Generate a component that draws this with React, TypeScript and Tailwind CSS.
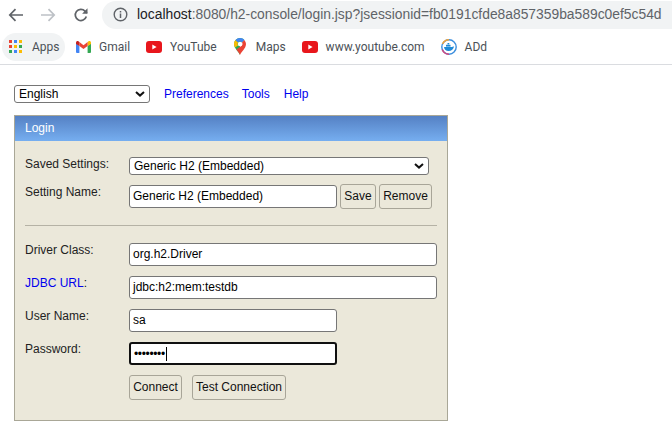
const sans = "font-['Liberation_Sans',Arial,sans-serif]";
const ui = "font-['Roboto','Noto_Sans',sans-serif]";

const Chevron = ({ className = '' }: { className?: string }) => (
  <svg width="10" height="6" viewBox="0 0 10 6" className={className}>
    <path d="M1 1l4 3.6L9 1" fill="none" stroke="#111" strokeWidth="2" />
  </svg>
);

const Yt = () => (
  <svg width="16" height="12" viewBox="0 0 16 12" className="shrink-0">
    <rect width="16" height="12" rx="3" fill="#e8161c" />
    <path d="M6.3 3.4v5.2L10.6 6z" fill="#fff" />
  </svg>
);

const Bookmark = ({ icon, label, className = '' }: { icon: React.ReactNode; label: string; className?: string }) => (
  <div className={`flex items-center ${className}`}>
    {icon}
    <span className="text-[12px] text-[#4b5157] whitespace-nowrap">{label}</span>
  </div>
);

const AppsIcon = () => {
  const colors = ['#ea4335', '#4285f4', '#fbbc04', '#ea4335', '#fbbc04', '#34a853', '#34a853', '#4285f4', '#fbbc04'];
  return (
    <div className="grid grid-cols-3 gap-[2px] w-[13px] shrink-0">
      {colors.map((c, i) => (
        <div key={i} className="w-[3px] h-[3px]" style={{ background: c }} />
      ))}
    </div>
  );
};

const Gmail = () => (
  <svg width="15" height="12" viewBox="0 0 15 12" className="shrink-0">
    <path d="M0 2.2V11a1 1 0 001 1h2.4V5z" fill="#4285f4" />
    <path d="M15 2.2V11a1 1 0 01-1 1h-2.4V5z" fill="#34a853" />
    <path d="M11.6 5V1l1-.7c1-.7 2.4 0 2.4 1.5V3z" fill="#fbbc04" />
    <path d="M3.4 5V1l4.1 3.2L11.6 1v4L7.5 8z" fill="#ea4335" />
    <path d="M0 1.8C0 .3 1.400-.4 2.400.3l1 .7v4L0 3z" fill="#c5221f" />
  </svg>
);

const MapsPin = () => (
  <svg width="12" height="17" viewBox="0 0 12 17" className="shrink-0">
    <path d="M6 17C4.800 13.500 0 10.500 0 6a6 6 0 016-6c1.700 0 3.200.7 4.300 1.900L6 6z" fill="#34a853" />
    <path d="M1.400 2.200A6 6 0 016 0c1.700 0 3.200.7 4.300 1.900L8 4.500A2.500 2.500 0 004 4.500z" fill="#4285f4" />
    <path d="M0 6c0-1.500.5-2.800 1.400-3.800L4 4.500A2.500 2.500 0 004 7.500L1 9.500C.4 8.500 0 7.300 0 6z" fill="#fbbc04" />
    <path d="M8 4.500l2.300-2.600A6 6 0 0112 6c0 4.500-4.800 7.500-6 11-.6-1.900-2.300-3.700-3.700-5.500L8 7.500a2.500 2.500 0 000-3z" fill="#ea4335" />
    <circle cx="6" cy="6" r="2.200" fill="#fff" />
  </svg>
);

const Docker = () => (
  <svg width="16" height="16" viewBox="0 0 16 16" className="shrink-0">
    <circle cx="8" cy="8" r="7.200" fill="#fff" stroke="#3b8ede" strokeWidth="1.400" />
    <path d="M1.500 5A7.200 7.200 0 018 .8" fill="none" stroke="#f2a33a" strokeWidth="1.400" />
    <path d="M1.200 10.500A7.200 7.200 0 008 15.200" fill="none" stroke="#d6457c" strokeWidth="1.400" />
    <path d="M3 8h8c.6-.6 1.300-.7 2-.5-.4 2.500-2.500 4.500-5.500 4.500C5 12 3.300 10.500 3 8z" fill="#1f8ad6" />
    <rect x="5" y="5.800" width="4.500" height="1.800" fill="#1f8ad6" />
    <rect x="6.500" y="4" width="1.800" height="1.500" fill="#1f8ad6" />
  </svg>
);

const fieldInput = 'h-[23px] rounded-[3px] border border-[#767676] bg-white pl-[3px] pb-[1px] flex items-center text-[12px] text-black whitespace-nowrap';
const button = 'h-[25px] rounded-[3px] border border-[#a8a598] bg-[#ebe8da] pb-[1px] flex items-center justify-center text-[12px] text-[#111]';

const Label = ({ children, className = '' }: { children: React.ReactNode; className?: string }) => (
  <div className={`w-[104px] shrink-0 text-[12px] leading-[14px] text-[#222] ${className}`}>{children}</div>
);

export default function App() {
  return (
    <div className={`w-[672px] h-[434px] bg-white overflow-hidden ${sans}`}>
      {/* browser toolbar */}
      <div className="h-[29px] flex items-center">
        <svg width="16" height="14" viewBox="0 0 16 14" className="ml-[8px] shrink-0">
          <path d="M15 7H2M7.500 1.200L1.800 7l5.700 5.800" fill="none" stroke="#5f6368" strokeWidth="1.700" />
        </svg>
        <svg width="16" height="14" viewBox="0 0 16 14" className="ml-[16px] shrink-0">
          <path d="M1 7h13M8.500 1.200L14.200 7l-5.700 5.800" fill="none" stroke="#bdc1c6" strokeWidth="1.700" />
        </svg>
        <svg width="16" height="16" viewBox="0 0 16 16" className="ml-[17px] shrink-0">
          <path d="M13.300 9.500a5.600 5.600 0 11-1.300-5.400L14 6" fill="none" stroke="#5f6368" strokeWidth="1.700" />
          <path d="M14.500 1.300v5.400H9.100z" fill="#5f6368" />
        </svg>
        <div className="ml-[13px] h-[28px] flex-1 rounded-l-[14px] bg-[#f1f3f4] flex items-center">
          <svg width="15" height="15" viewBox="0 0 15 15" className="ml-[11px] shrink-0">
            <circle cx="7.500" cy="7.500" r="6.300" fill="none" stroke="#5f6368" strokeWidth="1.400" />
            <path d="M7.500 6.600v4.300M7.500 3.900v1.500" stroke="#5f6368" strokeWidth="1.500" />
          </svg>
          <span className={`ml-[9px] text-[13.850px] text-[#5f6368] whitespace-nowrap ${sans}`}>
            <span className="text-[#202124]">localhost</span>:8080/h2-console/login.jsp?jsessionid=fb0191cfde8a857359ba589c0ef5c54d
          </span>
        </div>
      </div>

      {/* bookmarks bar */}
      <div className={`h-[36px] flex items-center border-b border-[#dadce0] ${ui}`}>
        <div className="ml-[2px] h-[28px] w-[63px] rounded-[14px] bg-[#f1f3f4] flex items-center pl-[7px] gap-[10px]">
          <AppsIcon />
          <span className="text-[12px] text-[#4b5157]">Apps</span>
        </div>
        <Bookmark icon={<Gmail />} label="Gmail" className="ml-[11px] gap-[8px]" />
        <Bookmark icon={<Yt />} label="YouTube" className="ml-[16px] gap-[8px]" />
        <Bookmark icon={<MapsPin />} label="Maps" className="ml-[17px] gap-[10px]" />
        <Bookmark icon={<Yt />} label="www.youtube.com" className="ml-[16px] gap-[8px]" />
        <Bookmark icon={<Docker />} label="ADd" className="ml-[16px] gap-[8px]" />
      </div>

      {/* page */}
      <div className="pl-[14px] pt-[19px] text-[12px]">
        <div className="flex items-center h-[19px]">
          <div className="w-[136px] h-[18px] rounded-[3px] border border-[#767676] bg-white flex items-center justify-between pl-1 pr-[4px] text-[12px] text-black">
            English
            <Chevron />
          </div>
          <a className="ml-[14px] text-[12px] text-[#0000ee]">Preferences</a>
          <a className="ml-[13px] text-[12px] text-[#0000ee]">Tools</a>
          <a className="ml-[14px] text-[12px] text-[#0000ee]">Help</a>
        </div>

        <div className="mt-[12px] w-[434px] h-[306px] border border-[#a9a797] bg-[#ebe8da]">
          <div className="h-[25px] pl-[10px] pb-[2px] flex items-center text-[12px] text-white bg-gradient-to-b from-[#5581c4] to-[#76aef0]">
            Login
          </div>

          <div className="pl-[10px] pt-[16px]">
            <div className="flex items-start">
              <Label>Saved Settings:</Label>
              <div className="w-[300px] h-[18px] rounded-[3px] border border-[#767676] bg-white flex items-center justify-between pl-[4px] pr-[4px] text-[12px] text-black">
                Generic H2 (Embedded)
                <Chevron />
              </div>
            </div>

            <div className="flex items-start mt-[10px]">
              <Label>Setting Name:</Label>
              <div className={`${fieldInput} w-[208px]`}>Generic H2 (Embedded)</div>
              <div className={`${button} w-[36px] ml-[3px] -mt-[1px]`}>Save</div>
              <div className={`${button} w-[53px] ml-[3px] -mt-[1px]`}>Remove</div>
            </div>

            <div className="mt-[16px] w-[412px] h-px bg-[#b5b2a5]" />

            <div className="flex items-start mt-[17px]">
              <Label>Driver Class:</Label>
              <div className={`${fieldInput} w-[308px] h-[22px]`}>org.h2.Driver</div>
            </div>
            <div className="flex items-start mt-[10px]">
              <Label>
                <span className="text-[#0000ee]">JDBC URL</span>:
              </Label>
              <div className={`${fieldInput} w-[308px]`}>jdbc:h2:mem:testdb</div>
            </div>
            <div className="flex items-start mt-[10px]">
              <Label>User Name:</Label>
              <div className={`${fieldInput} w-[208px]`}>sa</div>
            </div>
            <div className="flex items-start mt-[10px]">
              <Label>Password:</Label>
              <div className="w-[208px] h-[23px] rounded-[3px] border-2 border-[#101010] bg-white pl-[3px] flex items-center">
                <span className="text-[12px] tracking-[-0.350px] text-black leading-none">••••••••</span>
                <span className="ml-[1px] w-px h-[14px] bg-black" />
              </div>
            </div>
            <div className="flex items-start mt-[10px] pl-[104px]">
              <div className={`${button} w-[53px]`}>Connect</div>
              <div className={`${button} w-[94px] ml-[10px]`}>Test Connection</div>
            </div>
          </div>
        </div>
      </div>
    </div>
  );
}
